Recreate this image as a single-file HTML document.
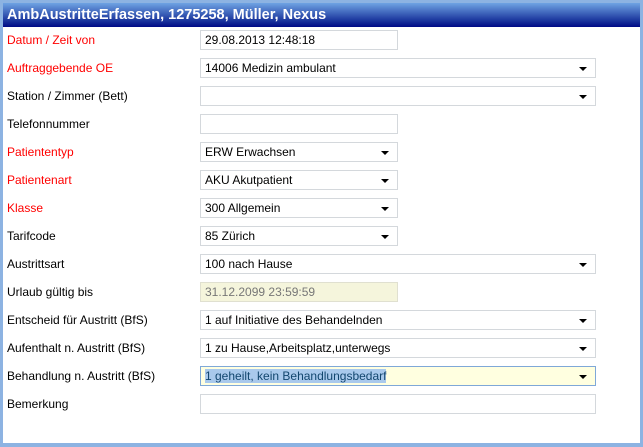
<!DOCTYPE html>
<html><head><meta charset="utf-8"><style>
*{box-sizing:border-box;margin:0;padding:0}
body{width:643px;height:447px;background:#8db3e2;position:relative;overflow:hidden;font-family:"Liberation Sans",Arial,sans-serif;font-size:12px}
.win{position:absolute;left:3px;top:3px;width:637px;height:440px;background:#fff}
.title{height:24px;background:linear-gradient(#6fa3e3,#1e3aa0 70%,#000a86);color:#fff;font-weight:bold;font-size:14.5px;line-height:24px;padding-left:4px}
.lbl{position:absolute;left:4px;color:#000;font-size:12px}
.red{color:#f00}
.f{position:absolute;left:197px;height:20px;border:1px solid #d4d8dc;background:#fff;font-size:12px;line-height:18px;padding-left:4px;color:#000}
.w{width:396px}.n{width:198px}
.sel::after{content:"";position:absolute;right:8px;top:8px;border-left:4px solid transparent;border-right:4px solid transparent;border-top:4.5px solid #000}
.dis{background:#f5f5dc;color:#777;border-color:#e0e0d0}
.hl{background:#ffffe0;border-color:#7fa8d8}
.hl span{background:#a9c9ec;color:#12466e}
</style></head><body>
<div class="win">
<div class="title">AmbAustritteErfassen, 1275258, Müller, Nexus</div>
<div class="lbl red" style="top:30px">Datum / Zeit von</div><div class="f n" style="top:27px">29.08.2013 12:48:18</div>
<div class="lbl red" style="top:58px">Auftraggebende OE</div><div class="f w sel" style="top:55px">14006 Medizin ambulant</div>
<div class="lbl" style="top:86px">Station / Zimmer (Bett)</div><div class="f w sel" style="top:83px"></div>
<div class="lbl" style="top:114px">Telefonnummer</div><div class="f n" style="top:111px"></div>
<div class="lbl red" style="top:142px">Patiententyp</div><div class="f n sel" style="top:139px">ERW Erwachsen</div>
<div class="lbl red" style="top:170px">Patientenart</div><div class="f n sel" style="top:167px">AKU Akutpatient</div>
<div class="lbl red" style="top:198px">Klasse</div><div class="f n sel" style="top:195px">300 Allgemein</div>
<div class="lbl" style="top:226px">Tarifcode</div><div class="f n sel" style="top:223px">85 Zürich</div>
<div class="lbl" style="top:254px">Austrittsart</div><div class="f w sel" style="top:251px">100 nach Hause</div>
<div class="lbl" style="top:282px">Urlaub gültig bis</div><div class="f n dis" style="top:279px">31.12.2099 23:59:59</div>
<div class="lbl" style="top:310px">Entscheid für Austritt (BfS)</div><div class="f w sel" style="top:307px">1 auf Initiative des Behandelnden</div>
<div class="lbl" style="top:338px">Aufenthalt n. Austritt (BfS)</div><div class="f w sel" style="top:335px">1 zu Hause,Arbeitsplatz,unterwegs</div>
<div class="lbl" style="top:366px">Behandlung n. Austritt (BfS)</div><div class="f w sel hl" style="top:363px"><span>1 geheilt, kein Behandlungsbedarf</span></div>
<div class="lbl" style="top:394px">Bemerkung</div><div class="f w" style="top:391px"></div>
</div>
</body></html>
